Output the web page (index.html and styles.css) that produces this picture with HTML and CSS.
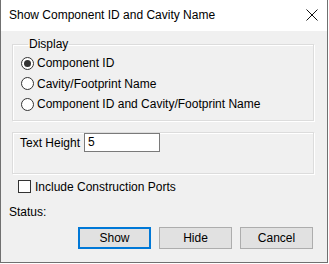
FILE: index.html
```html
<!DOCTYPE html>
<html>
<head>
  <title>Show Component ID and Cavity Name</title>
  <meta name="viewport" content="width=device-width, initial-scale=1.0">
  <link rel="stylesheet" href="styles.css">
</head>
<body>
  <div class="window">
    <div class="titlebar">
      <span class="title">Show Component ID and Cavity Name</span>
      <svg class="close" width="12" height="12" viewBox="0 0 12 12">
        <path d="M0.5 0.5 L11.5 11.5 M11.5 0.5 L0.5 11.5" stroke="#111" stroke-width="1" fill="none"/>
      </svg>
    </div>

    <div class="content">
      <fieldset class="group group-display">
        <legend>Display</legend>
        <label class="radio-row">
          <span class="radio checked"></span>
          Component ID
        </label>
        <label class="radio-row">
          <span class="radio"></span>
          Cavity/Footprint Name
        </label>
        <label class="radio-row">
          <span class="radio"></span>
          Component ID and Cavity/Footprint Name
        </label>
      </fieldset>

      <fieldset class="group group-height">
        <span class="field-label">Text Height</span>
        <span class="text-input">5</span>
      </fieldset>

      <label class="check-row">
        <span class="checkbox"></span>
        Include Construction Ports
      </label>

      <div class="status">Status:</div>

      <div class="btn-group">
        <button class="btn btn-default">Show</button>
        <button class="btn">Hide</button>
        <button class="btn">Cancel</button>
      </div>
    </div>
  </div>
</body>
</html>
```

FILE: styles.css
```css
* {
  margin: 0;
  padding: 0;
  box-sizing: border-box;
}

body {
  font-family: 'Liberation Sans', Arial, sans-serif;
  font-size: 12px;
  color: #000;
  background: #ffffff;
}

.window {
  width: 328px;
  height: 263px;
  border: 1px solid #707070;
  border-top: none;
  background: #f0f0f0;
  display: flex;
  flex-direction: column;
}

.titlebar {
  height: 31px;
  background: #ffffff;
  display: flex;
  align-items: center;
  justify-content: space-between;
  padding: 0 9px 2px 8px;
}

.title {
  font-size: 12px;
  color: #000;
}

.content {
  flex: 1;
  padding: 6px 13px 0 11px;
  display: flex;
  flex-direction: column;
}

.group {
  border: 1px solid #dcdcdc;
  box-shadow: inset 1px 1px 0 #ffffff, 1px 1px 0 #ffffff;
}

.group-display {
  height: 84px;
  padding: 2px 0 0 8px;
}

.group-display legend {
  margin-left: 7px;
  padding: 0 1px;
  line-height: 14px;
}

.radio-row {
  display: flex;
  align-items: center;
  gap: 3px;
  height: 20.5px;
}

.radio {
  width: 13px;
  height: 13px;
  border: 1px solid #333;
  border-radius: 50%;
  background: #fff;
  display: flex;
  align-items: center;
  justify-content: center;
}

.radio.checked::after {
  content: "";
  width: 7px;
  height: 7px;
  border-radius: 50%;
  background: #333;
}

.group-height {
  margin-top: 11px;
  height: 42px;
  display: flex;
  align-items: center;
  padding: 0 0 0 7px;
}

.field-label {
  width: 64px;
}

.text-input {
  width: 76px;
  height: 19px;
  border: 1px solid #7a7a7a;
  background: #fff;
  padding: 1px 0 0 3px;
  line-height: 15px;
}

.check-row {
  display: flex;
  align-items: center;
  gap: 4px;
  margin-top: 6px;
  padding-left: 6px;
  height: 13px;
}

.checkbox {
  width: 13px;
  height: 13px;
  border: 1px solid #333;
  background: #fff;
}

.status {
  margin-top: 12px;
  margin-left: -3px;
  line-height: 14px;
}

.btn-group {
  display: flex;
  justify-content: flex-end;
  gap: 8px;
  margin-top: 8px;
  padding-right: 1px;
}

.btn {
  width: 73px;
  height: 22px;
  border: 1px solid #adadad;
  background: #e1e1e1;
  font-family: 'Liberation Sans', Arial, sans-serif;
  font-size: 12px;
  color: #000;
}

.btn-default {
  border: 2px solid #0078d7;
}
```
